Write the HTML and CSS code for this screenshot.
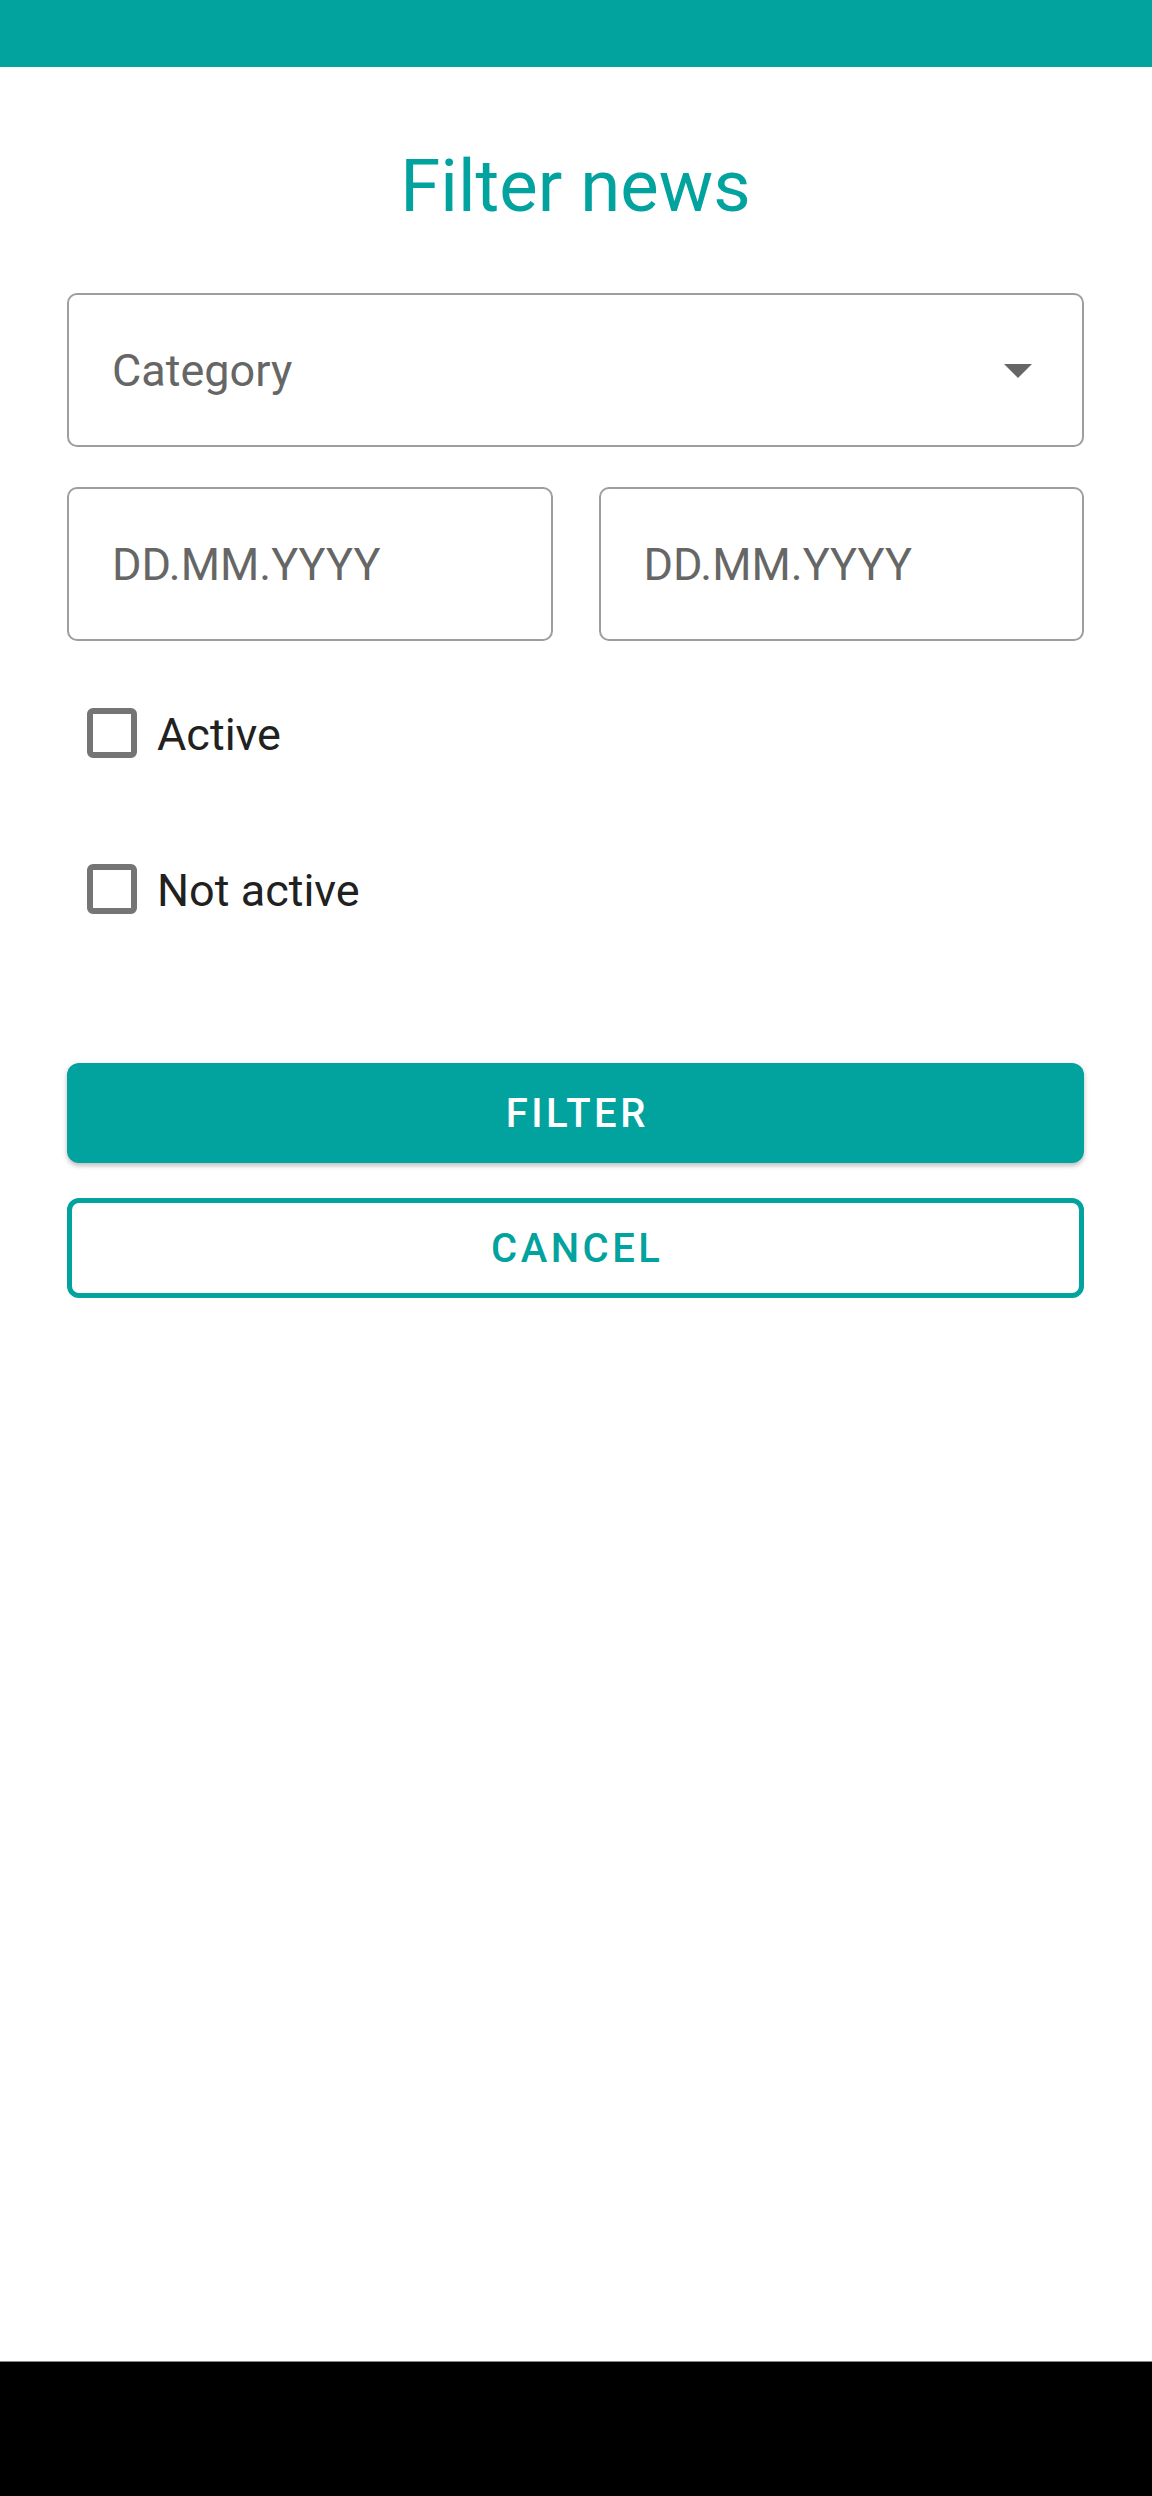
FILE: index.html
```html
<!DOCTYPE html>
<html lang="en">
<head>
<meta charset="utf-8">
<title>Filter news</title>
<link rel="stylesheet" href="styles.css">
</head>
<body>
<div class="screen">
  <div class="statusbar"></div>
  <main class="content">
    <h1 class="title">Filter news</h1>
    <div class="field select">
      <span class="placeholder">Category</span>
      <svg class="caret" width="28" height="14" viewBox="0 0 28 14"><path d="M0 0 L28 0 L14 14 Z" fill="#666666"/></svg>
    </div>
    <div class="date-row">
      <div class="field"><span class="placeholder">DD.MM.YYYY</span></div>
      <div class="field"><span class="placeholder">DD.MM.YYYY</span></div>
    </div>
    <label class="check-row first">
      <span class="box"></span>
      <span class="label">Active</span>
    </label>
    <label class="check-row second">
      <span class="box"></span>
      <span class="label">Not active</span>
    </label>
    <button class="btn primary">FILTER</button>
    <button class="btn outline">CANCEL</button>
  </main>
  <div class="navbar"></div>
</div>
</body>
</html>
```

FILE: styles.css
```css
html, body {
  margin: 0;
  padding: 0;
  background: #ffffff;
}

body {
  font-family: Roboto, "Noto Sans", "Liberation Sans", sans-serif;
}

.screen {
  min-height: 2496px;
  display: flex;
  flex-direction: column;
}

.statusbar {
  height: 67px;
  background: #02a29e;
}

.content {
  padding: 0 68px 0 67px;
  display: flex;
  flex-direction: column;
}

.title {
  margin: 84px 0 0;
  font-size: 72.5px;
  line-height: 72px;
  font-weight: 400;
  color: #02a29e;
  text-align: center;
}

.field {
  box-sizing: border-box;
  height: 154px;
  border: 2.5px solid #9e9e9e;
  border-radius: 10px;
  display: flex;
  align-items: center;
  padding-left: 43px;
}

.select {
  margin-top: 70px;
  justify-content: space-between;
  padding-right: 50px;
}

.caret {
  display: block;
  margin-top: 2px;
}

.placeholder {
  font-size: 45px;
  line-height: 45px;
  color: #666666;
}

.date-row {
  margin-top: 40px;
  display: grid;
  grid-template-columns: 1fr 1fr;
  column-gap: 46px;
}

.check-row {
  height: 96px;
  display: flex;
  align-items: center;
  padding-left: 20px;
}

.check-row.first {
  margin-top: 44px;
}

.check-row.second {
  margin-top: 60px;
}

.box {
  box-sizing: border-box;
  width: 50px;
  height: 50px;
  border: 6px solid #757575;
  border-radius: 6px;
  flex: none;
}

.label {
  margin-left: 20px;
  padding-top: 3px;
  font-size: 45px;
  line-height: 45px;
  color: #212121;
}

.btn {
  box-sizing: border-box;
  height: 100px;
  width: 100%;
  border-radius: 12px;
  font-family: Roboto, "Noto Sans", "Liberation Sans", sans-serif;
  font-size: 40px;
  font-weight: 500;
  letter-spacing: 3.5px;
  padding: 0 0 0 3.5px;
  cursor: pointer;
}

.primary {
  margin-top: 126px;
  background: #02a29e;
  color: #ffffff;
  border: none;
  box-shadow: 0 3px 4px rgba(0, 0, 0, 0.2), 0 1px 8px rgba(0, 0, 0, 0.08);
}

.outline {
  margin-top: 35px;
  background: #ffffff;
  color: #02a29e;
  border: 5px solid #02a29e;
}

.navbar {
  margin-top: auto;
  height: 134px;
  background: #000000;
  border-top: 1px solid #8a8a8a;
}
```
